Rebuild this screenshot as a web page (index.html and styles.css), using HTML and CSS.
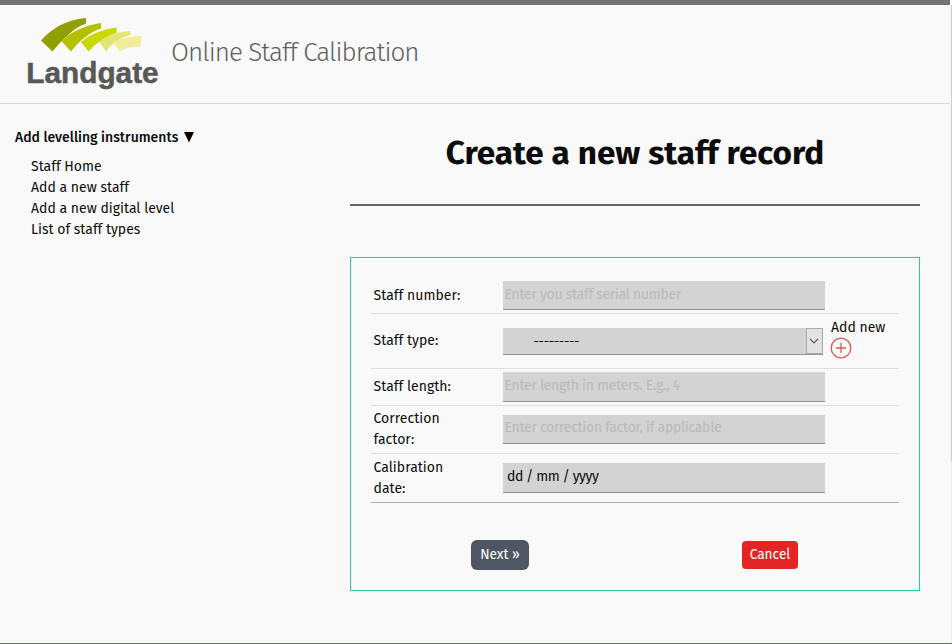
FILE: index.html
```html
<!DOCTYPE html>
<html lang="en">
<head>
<meta charset="utf-8">
<title>Online Staff Calibration</title>
<link rel="stylesheet" href="styles.css">
</head>
<body>
<header class="header">
  <svg class="logo" viewBox="0 0 136 80" role="img" aria-label="Landgate">
    <path fill="#8fa000" d="M13 30.500C24 18 38 10 58 8V13.500C47 17 35 29 24.500 41.500Z"/>
    <path fill="#b3bf00" d="M33.500 31C44 21 58 15 73 13V18.500C62 22 51 31 43 41.500Z"/>
    <path fill="#cbd700" d="M53 32C62 24 76 19 88.500 17.500V23C78 26 68 33 60.500 41.500Z"/>
    <path fill="#e1e574" d="M71.500 32C79 25 90 22 102.500 21V25C94 27 84 33 78 41.500Z"/>
    <path fill="#f0ee9b" d="M85.500 33C92 28 103 26 114 26L112 37.500C103 36 97 38 92 41.500Z"/>
    <text class="logo-text" x="-1.8" y="73" textLength="132.500" lengthAdjust="spacingAndGlyphs">Landgate</text>
  </svg>
  <div class="site-title">Online Staff Calibration</div>
</header>
<div class="layout">
  <nav class="sidebar">
    <div class="menu-title"><span class="menu-label">Add levelling instruments</span><svg class="caret" viewBox="0 0 10 11"><path d="M0 0H10L5 10.500Z"/></svg></div>
    <ul class="menu">
      <li><a>Staff Home</a></li>
      <li><a>Add a new staff</a></li>
      <li><a>Add a new digital level</a></li>
      <li><a>List of staff types</a></li>
    </ul>
  </nav>
  <main class="main">
    <h1 class="heading">Create a new staff record</h1>
    <form class="form">
      <div class="row row-number"><label class="label">Staff number:</label><div class="field placeholder">Enter you staff serial number</div></div>
      <div class="row row-type"><label class="label">Staff type:</label>
        <div class="field select"><span class="dashes">---------</span><span class="arrow"><svg viewBox="0 0 10 6"><path d="M1 .8L5 4.800L9 .8"/></svg></span></div>
        <div class="add"><span>Add new</span><svg viewBox="0 0 22 22"><circle cx="11" cy="11" r="9.800"/><path d="M11 6V16M6 11H16"/></svg></div>
      </div>
      <div class="row row-length"><label class="label">Staff length:</label><div class="field placeholder">Enter length in meters. E.g., 4</div></div>
      <div class="row row-factor"><label class="label">Correction<br>factor:</label><div class="field placeholder">Enter correction factor, if applicable</div></div>
      <div class="row row-date"><label class="label">Calibration<br>date:</label><div class="field date">dd / mm / yyyy</div></div>
      <div class="actions"><button type="button" class="btn next">Next »</button><button type="button" class="btn cancel">Cancel</button></div>
    </form>
  </main>
</div>
<div class="scrollbar"></div>
<div class="bottom-edge"></div>
</body>
</html>
```
FILE: styles.css
```css
* { box-sizing: border-box; }
body {
  margin: 0;
  height: 644px;
  overflow: hidden;
  background: #f9f9f9;
  color: #0c0c0c;
  font: 14px/21px "Fira Sans", "Noto Sans", sans-serif;
}
.header {
  display: flex;
  height: 104px;
  margin-right: 2px;
  padding: 5px 0 0 28px;
  border-top: 5px solid #737373;
  border-bottom: 1px solid #d6d6d6;
}
.logo { width: 136px; height: 80px; overflow: visible; }
.logo-text { font: bold 30px "Liberation Sans", sans-serif; fill: #585856; stroke: #585856; stroke-width: .5; }
.site-title {
  margin: 25px 0 0 7px;
  font-size: 26px;
  line-height: 36px;
  font-weight: 300;
  color: #606060;
  white-space: nowrap;
  letter-spacing: -0.95px;
}
.layout { display: flex; }
.sidebar { width: 350px; padding: 23px 0 0 15px; }
.menu-title { display: flex; align-items: center; gap: 6px; font-weight: 500; white-space: nowrap; }
.caret { width: 10px; height: 11px; }
.menu { list-style: none; margin: 8px 0 0; padding: 0 0 0 16px; }
.main { width: 570px; }
.heading {
  height: 102px;
  margin: 0;
  padding: 27px 0 0;
  border-bottom: 2px solid #686566;
  text-align: center;
  font-size: 33.3px;
  line-height: 44px;
  font-weight: 700;
  white-space: nowrap;
}
.form { height: 334px; margin-top: 51px; padding: 19px 20px 0; border: 1px solid #1bd0a2; }
.row { display: flex; align-items: flex-start; border-bottom: 1px solid #dedede; }
.label { width: 132px; padding-left: 2.5px; flex: none; letter-spacing: .03px; }
.field { width: 322px; height: 30px; flex: none; background: #d3d3d3; border-bottom: 1px solid #929292; white-space: nowrap; }
.placeholder { padding: 3px 0 0 1.5px; color: #b9b9b9; letter-spacing: -0.28px; }
.row-number { height: 37px; padding-top: 4px; }
.row-number .field { height: 29px; }
.row-number .label { margin-top: 4px; }
.row-type { height: 55px; padding-top: 3px; }
.row-type .label { margin-top: 13px; }
.select { display: flex; justify-content: space-between; width: 320px; height: 27px; margin-top: 11px; padding-left: 30.5px; }
.dashes { padding-top: 4px; font-size: 13.333px; letter-spacing: -0.3px; }
.arrow { display: flex; align-items: center; justify-content: center; width: 17px; height: 26px; border: 1px solid #a9a9a9; background: #e2e2e2; }
.arrow svg { width: 10px; height: 6px; margin: -1px 0 0 -1px; fill: none; stroke: #555; stroke-width: 1.2; }
.add { display: flex; flex-direction: column; margin-left: 8px; white-space: nowrap; }
.add svg { width: 22px; height: 22px; margin: -0.6px 0 0 -0.6px; fill: none; stroke: #d95757; stroke-width: 1.3; }
.row-length { height: 37px; padding-top: 3px; }
.row-length .label { margin-top: 4px; }
.row-factor { height: 48px; padding-top: 2px; }
.row-factor .field { height: 29px; margin-top: 7px; padding-top: 2px; }
.row-date { height: 49px; padding-top: 3px; border-color: #adadad; }
.row-date .field { margin-top: 6px; padding: 3px 0 0 4px; letter-spacing: -0.45px; }
.actions { display: flex; justify-content: space-between; align-items: center; padding: 37px 101px 0 100px; }
.btn { padding: 0 0 2px; border: 0; color: #fff; font: inherit; font-size: 13.7px; }
.next { width: 58px; height: 30px; border-radius: 6px; background: #4e5664; }
.cancel { width: 56px; height: 28px; border-radius: 4px; background: #e32526; }
.scrollbar { position: absolute; top: 5px; right: 0; width: 1px; height: 638px; background: linear-gradient(#cdcdcd 456px, #ededed 456px); }
.bottom-edge { position: absolute; left: 0; bottom: 0; width: 952px; height: 1px; background: #68706c; }
```
